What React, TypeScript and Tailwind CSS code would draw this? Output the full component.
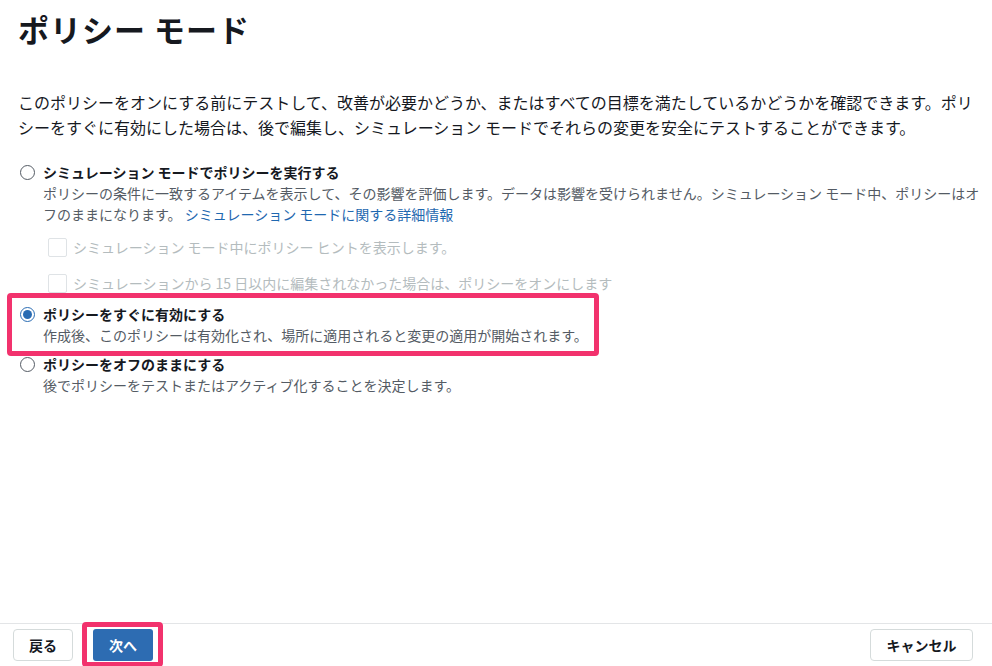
import React, { useState } from 'react';

// Radio button in the style of the original console
const Radio: React.FC<{ checked: boolean; onClick: () => void }> = ({ checked, onClick }) => (
  <button
    type="button"
    onClick={onClick}
    className={`mt-[3px] w-[15px] h-[15px] shrink-0 rounded-full border flex items-center justify-center bg-white ${
      checked ? 'border-[#2a6cb3] border-[1.5px]' : 'border-[#545b64]'
    }`}
  >
    {checked && <span className="w-[9px] h-[9px] rounded-full bg-[#2a6cb3]" />}
  </button>
);

const DisabledCheck: React.FC<{ label: string }> = ({ label }) => (
  <div className="flex items-center h-[24px] pl-[30px]">
    <span className="w-[19px] h-[19px] rounded-[2px] border border-[#dfe3e6] bg-white shrink-0" />
    <span className="ml-[6px] text-[14px] leading-[21px] text-[#b4bcbe]">{label}</span>
  </div>
);

const App: React.FC = () => {
  const [mode, setMode] = useState<'sim' | 'on' | 'off'>('on');

  return (
    <div
      className="w-[992px] h-[666px] bg-white flex flex-col overflow-hidden"
      style={{ fontFamily: '"Noto Sans CJK JP", "Noto Sans", sans-serif' }}
    >
      <div className="flex-1 px-[18px]">
        {/* Titolo */}
        <h1 className="mt-[9px] text-[31px] leading-[40px] font-bold text-[#16191f] tracking-[1px]">
          ポリシー モード
        </h1>

        {/* Descrizione */}
        <p className="mt-[41px] text-[16px] leading-[25px] text-[#16191f] whitespace-nowrap">
          このポリシーをオンにする前にテストして、改善が必要かどうか、またはすべての目標を満たしているかどうかを確認できます。ポリ
          <br />
          シーをすぐに有効にした場合は、後で編集し、シミュレーション モードでそれらの変更を安全にテストすることができます。
        </p>

        {/* Opzione 1 */}
        <div className="mt-[22px] flex items-start gap-[8px] pl-[2px]">
          <Radio checked={mode === 'sim'} onClick={() => setMode('sim')} />
          <div className="text-[14px] leading-[21px]">
            <div className="font-bold text-[#16191f]">シミュレーション モードでポリシーを実行する</div>
            <div className="text-[#545b64] whitespace-nowrap">
              ポリシーの条件に一致するアイテムを表示して、その影響を評価します。データは影響を受けられません。シミュレーション モード中、ポリシーはオ
              <br />
              フのままになります。 <span className="text-[#1f68b0]">シミュレーション モードに関する詳細情報</span>
            </div>
          </div>
        </div>

        <div className="mt-[10px] flex flex-col gap-[12px]">
          <DisabledCheck label="シミュレーション モード中にポリシー ヒントを表示します。" />
          <DisabledCheck label="シミュレーションから 15 日以内に編集されなかった場合は、ポリシーをオンにします" />
        </div>

        {/* Opzione 2 */}
        <div className="relative mt-[9px] flex items-start gap-[8px] pl-[2px]">
          <Radio checked={mode === 'on'} onClick={() => setMode('on')} />
          <div className="text-[14px] leading-[21px]">
            <div className="font-bold text-[#16191f]">ポリシーをすぐに有効にする</div>
            <div className="text-[#545b64]">
              作成後、このポリシーは有効化され、場所に適用されると変更の適用が開始されます。
            </div>
          </div>
          <div className="absolute left-[-11px] top-[-11px] w-[592px] h-[63px] border-[5px] border-[#f2326d] rounded-[4px] pointer-events-none" />
        </div>

        {/* Opzione 3 */}
        <div className="mt-[8px] flex items-start gap-[8px] pl-[2px]">
          <Radio checked={mode === 'off'} onClick={() => setMode('off')} />
          <div className="text-[14px] leading-[21px]">
            <div className="font-bold text-[#16191f]">ポリシーをオフのままにする</div>
            <div className="text-[#545b64]">後でポリシーをテストまたはアクティブ化することを決定します。</div>
          </div>
        </div>
      </div>

      {/* Footer */}
      <div className="h-[43px] border-t border-[#e3e5e7] flex items-start justify-between pl-[13px] pr-[19px] pt-[5px]">
        <div className="flex items-center gap-[20px]">
          <button className="w-[60px] h-[32px] rounded-[4px] border border-[#d5dbdb] bg-white text-[14px] font-bold text-[#16191f]">
            戻る
          </button>
          <div className="relative">
            <button className="w-[60px] h-[32px] rounded-[3px] bg-[#2d6cb2] text-[14px] font-bold text-white">
              次へ
            </button>
            <div className="absolute left-[-11px] top-[-7px] w-[81px] h-[45px] border-[5px] border-[#f2326d] rounded-[4px] pointer-events-none" />
          </div>
        </div>
        <button className="w-[103px] h-[32px] rounded-[4px] border border-[#d5dbdb] bg-white text-[14px] font-bold text-[#16191f]">
          キャンセル
        </button>
      </div>
    </div>
  );
};

export default App;
